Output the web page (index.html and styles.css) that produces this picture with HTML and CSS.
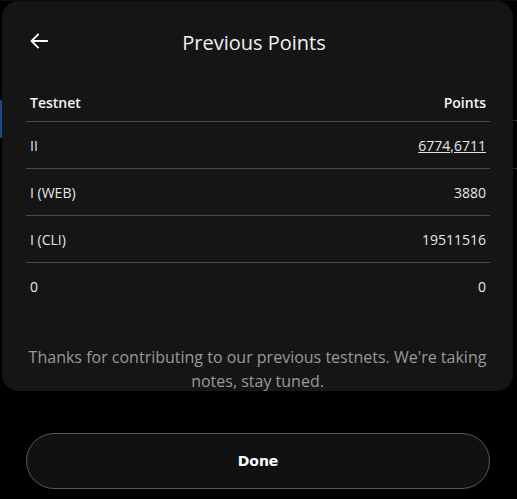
FILE: index.html
```html
<!DOCTYPE html>
<html>
<head>
<meta charset="utf-8">
<link rel="stylesheet" href="styles.css">
</head>
<body>
<div class="backdrop">
  <div class="bg-tab"></div>
  <div class="bg-top"></div>
  <div class="bg-line l1"></div>
  <div class="bg-line l2"></div>
  <section class="panel">
    <header class="head">
      <button class="back" aria-label="Back">
        <svg width="18" height="16" viewBox="0 0 18 16"><path d="M17 8H2M8 1.5L1.5 8L8 14.5" fill="none" stroke="#fff" stroke-width="1.8" stroke-linecap="square"/></svg>
      </button>
      <h1 class="title">Previous Points</h1>
    </header>
    <table class="points">
      <thead>
        <tr><th class="c-left">Testnet</th><th class="c-right">Points</th></tr>
      </thead>
      <tbody>
        <tr><td class="c-left">II</td><td class="c-right"><a class="link">6774,6711</a></td></tr>
        <tr><td class="c-left">I (WEB)</td><td class="c-right">3880</td></tr>
        <tr><td class="c-left">I (CLI)</td><td class="c-right">19511516</td></tr>
        <tr><td class="c-left">0</td><td class="c-right">0</td></tr>
      </tbody>
    </table>
    <p class="note">Thanks for contributing to our previous testnets. We're taking notes, stay tuned.</p>
  </section>
  <div class="actions">
    <button class="done">Done</button>
  </div>
</div>
</body>
</html>
```
FILE: styles.css
```css
html, body {
  margin: 0;
  padding: 0;
  background: #000;
}
body {
  width: 517px;
  height: 499px;
  overflow: hidden;
  font-family: "Open Sans", "Noto Sans", sans-serif;
  color: #fff;
}
.backdrop {
  position: relative;
  width: 517px;
  height: 499px;
  padding-top: 1px;
  box-sizing: border-box;
}
.bg-tab {
  position: absolute;
  left: 0;
  top: 100px;
  width: 2px;
  height: 38px;
  background: #1d4a7e;
}
.bg-top {
  position: absolute;
  left: 0;
  top: 0;
  width: 517px;
  height: 1px;
  background: #0c0c0c;
}
.bg-line {
  position: absolute;
  right: 0;
  width: 4px;
  height: 1px;
  background: #333;
}
.bg-line.l1 { top: 120px; }
.bg-line.l2 { top: 168px; }
.panel {
  position: relative;
  margin: 0 4px 0 2px;
  height: 390px;
  background: #151515;
  border-radius: 16px;
  padding: 0 24px;
  box-sizing: border-box;
}
.head {
  display: flex;
  align-items: center;
  justify-content: center;
  position: relative;
  height: 82px;
  padding-right: 7px;
  box-sizing: border-box;
}
.back {
  position: absolute;
  left: 4px;
  top: 32px;
  background: none;
  border: 0;
  padding: 0;
  display: flex;
}
.title {
  margin: 0;
  font-size: 20px;
  font-weight: 400;
  color: #f2f2f2;
}
.points {
  width: 464px;
  border-collapse: collapse;
  font-size: 14px;
}
.points th {
  font-weight: 600;
  color: #f5f5f5;
  height: 38px;
  padding: 0 4px;
  border-bottom: 1px solid #4a4a4a;
}
.points td {
  height: 46px;
  padding: 0 4px;
  color: #e6e6e6;
  border-bottom: 1px solid #4a4a4a;
}
.points tbody tr:last-child td { border-bottom: 0; }
.c-left { text-align: left; }
.c-right { text-align: right; }
.link {
  text-decoration: underline;
  color: #e6e6e6;
}
.note {
  margin: 36px 0 0;
  text-align: center;
  color: #9a9a9a;
  font-size: 16px;
  line-height: 24px;
}
.actions {
  padding: 42px 27px 0 26px;
}
.done {
  width: 100%;
  height: 56px;
  border-radius: 28px;
  border: 1px solid #5a5a5a;
  background: #111;
  color: #fff;
  font-family: "DejaVu Sans", sans-serif;
  font-weight: 700;
  font-size: 14px;
}
```
